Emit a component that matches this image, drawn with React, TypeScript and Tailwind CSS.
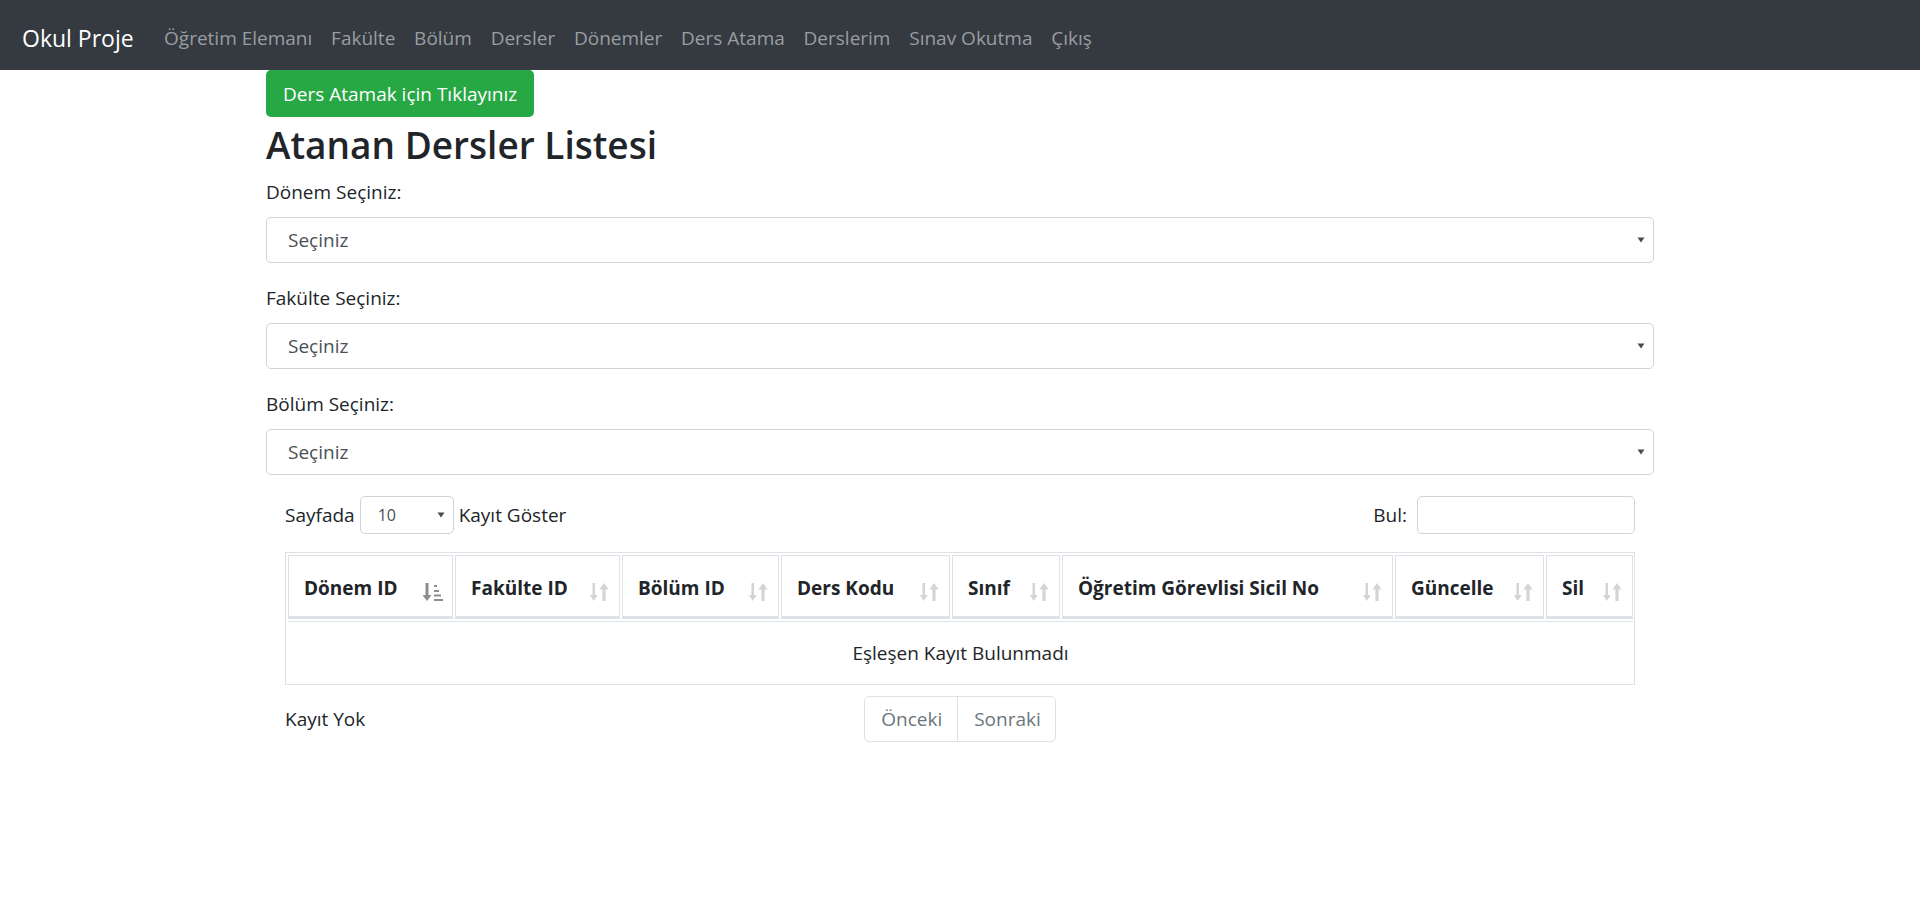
import React from 'react';

const navLinks = [
  'Öğretim Elemanı',
  'Fakülte',
  'Bölüm',
  'Dersler',
  'Dönemler',
  'Ders Atama',
  'Derslerim',
  'Sınav Okutma',
  'Çıkış',
];

const columns = [
  { title: 'Dönem ID', w: 'w-[165px]', active: true },
  { title: 'Fakülte ID', w: 'w-[165px]' },
  { title: 'Bölüm ID', w: 'w-[157px]' },
  { title: 'Ders Kodu', w: 'w-[169px]' },
  { title: 'Sınıf', w: 'w-[108px]' },
  { title: 'Öğretim Görevlisi Sicil No', w: 'w-[331px]' },
  { title: 'Güncelle', w: 'w-[149px]' },
  { title: 'Sil', w: 'flex-1' },
];

const Caret = () => (
  <svg width="8" height="6" viewBox="0 0 8 6">
    <path d="M0.5 0.5h7L4 5.5z" fill="#474c51" />
  </svg>
);

const SortIcon = ({ active }: { active?: boolean }) =>
  active ? (
    <svg width="20" height="20" viewBox="0 0 20 20">
      <path d="M2.5 1h3v12h3L4 19l-4.5-6h3z" fill="#8a8d91" />
      <rect x="11" y="3" width="3" height="2" fill="#8a8d91" />
      <rect x="11" y="8" width="5" height="2" fill="#8a8d91" />
      <rect x="11" y="12.5" width="7" height="2" fill="#8a8d91" />
      <rect x="11" y="17" width="9" height="2" fill="#8a8d91" />
    </svg>
  ) : (
    <svg width="20" height="20" viewBox="0 0 20 20">
      <path d="M2.5 1h2.5v12h2.7L3.75 19-0.2 13h2.7z" fill="#d3d4d6" />
      <path d="M14 1l4.7 6.5h-3.1V19h-3.2V7.5H9.3z" fill="#d3d4d6" />
    </svg>
  );

const SelectBox = () => (
  <div className="flex h-[46px] items-center justify-between rounded-[5px] border border-[#ced4da] bg-white pl-[21px] pr-[8px] text-[#495057]">
    <span>Seçiniz</span>
    <Caret />
  </div>
);

const App: React.FC = () => {
  const groups = ['Dönem Seçiniz:', 'Fakülte Seçiniz:', 'Bölüm Seçiniz:'];

  return (
    <div className="min-h-screen bg-white font-['Open_Sans',sans-serif] text-[19px] leading-[28px] text-[#212529]">
      <nav className="flex h-[70px] items-center bg-[#343a40] pl-[22px] pt-[5px]">
        <span className="mr-[21px] text-[23px] leading-[34px] text-white">Okul Proje</span>
        <ul className="flex items-center">
          {navLinks.map((l) => (
            <li key={l} className="px-[9.4px] text-[#9a9da0]">
              {l}
            </li>
          ))}
        </ul>
      </nav>

      <div className="mx-auto w-[1388px]">
        <button className="h-[47px] rounded-[5px] bg-[#28a745] px-[17px] text-white">
          Ders Atamak için Tıklayınız
        </button>
        <h1 className="mb-[9px] mt-[4px] text-[37px] font-semibold leading-[48px]">Atanan Dersler Listesi</h1>

        {groups.map((g) => (
          <div key={g} className="mb-[21px]">
            <label className="mb-[10px] block leading-[29px]">{g}</label>
            <SelectBox />
          </div>
        ))}

        <div className="px-[19px]">
          <div className="flex h-[38px] items-center justify-between">
            <div className="flex items-center">
              <span>Sayfada</span>
              <div className="mx-[5px] flex h-[38px] w-[94px] items-center justify-between rounded-[5px] border border-[#ced4da] pl-[17px] pr-[8px] text-[16px] text-[#495057]">
                <span>10</span>
                <Caret />
              </div>
              <span>Kayıt Göster</span>
            </div>
            <div className="flex items-center">
              <span className="mr-[10px]">Bul:</span>
              <div className="h-[38px] w-[218px] rounded-[5px] border border-[#ced4da]" />
            </div>
          </div>

          <div className="mt-[18px] border border-[#dee2e6] pl-[2px] pr-[1px] pt-[2px]">
            <div className="flex gap-[2px]">
              {columns.map((c) => (
                <div
                  key={c.title}
                  className={`${c.w} flex items-end justify-between border border-b-[3px] border-[#dee2e6] pb-[14px] pl-[15px] pr-[9px] pt-[18px] font-bold`}
                >
                  <span className="whitespace-nowrap">{c.title}</span>
                  <SortIcon active={c.active} />
                </div>
              ))}
            </div>
            <div className="mt-[2px] flex h-[63px] items-center justify-center border-t border-[#dee2e6]">
              Eşleşen Kayıt Bulunmadı
            </div>
          </div>

          <div className="mt-[11px] grid grid-cols-[1fr_auto_1fr] items-center">
            <span>Kayıt Yok</span>
            <div className="flex h-[46px] rounded-[5px] border border-[#dee2e6] text-[#6c757d]">
              <span className="flex items-center border-r border-[#dee2e6] pl-[16px] pr-[15px]">Önceki</span>
              <span className="flex items-center pl-[16px] pr-[14px]">Sonraki</span>
            </div>
            <span />
          </div>
        </div>
      </div>
    </div>
  );
};

export default App;
